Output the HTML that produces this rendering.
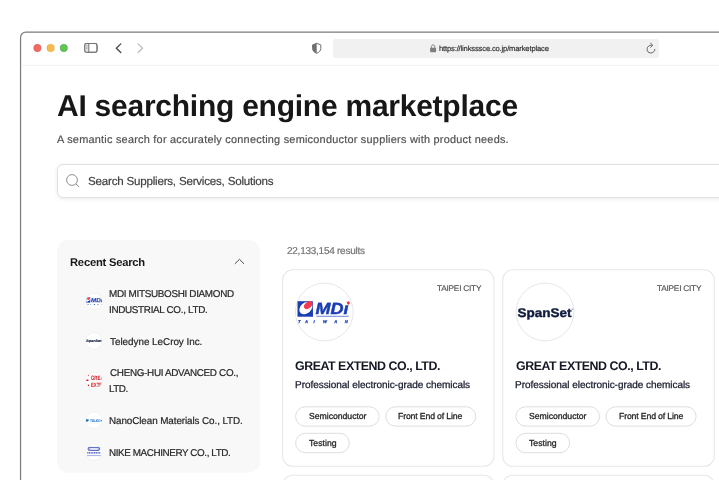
<!DOCTYPE html>
<html lang="en">
<head>
<meta charset="utf-8">
<title>AI searching engine marketplace</title>
<style>
*{box-sizing:border-box;margin:0;padding:0}
html,body{width:719px;height:480px;overflow:hidden;background:#fff}
body{font-family:"Liberation Sans",sans-serif;color:#171717;position:relative}
.abs{position:absolute}
.t{position:absolute;white-space:nowrap;line-height:1;text-rendering:geometricPrecision;will-change:transform}
#search{position:absolute;left:57px;top:164px;width:700px;height:34px;border:1px solid #e0e0e0;border-radius:6px;background:#fff;box-shadow:0 1px 4px rgba(0,0,0,.08)}
.li{font-size:9.9px;color:#262626;-webkit-text-stroke:.2px #262626}
.cw{position:absolute;top:0;width:0;height:0}
.city{font-size:8.3px;color:#525252;left:436.65px;top:284px;letter-spacing:-.245px;-webkit-text-stroke:.15px #525252}
.name{font-size:12.4px;font-weight:700;color:#141824;left:295.3px;top:360px;letter-spacing:-.464px}
.desc{font-size:10px;color:#171a2b;left:295.05px;top:381px;letter-spacing:-.043px;-webkit-text-stroke:.25px #171a2b}
.pt{font-size:8.7px;color:#262626;-webkit-text-stroke:.3px #262626}
</style>
</head>
<body>
<svg class="abs" style="left:0;top:0" width="719" height="480" viewBox="0 0 719 480">
  <!-- window frame -->
  <rect x="20.55" y="32.2" width="760" height="520" rx="5.2" fill="#fff" stroke="#7b7b7b" stroke-width="1.2"/>
  <line x1="21.2" y1="65.3" x2="719" y2="65.3" stroke="#f2f2f2" stroke-width="1"/>
  <!-- traffic lights -->
  <circle cx="37.4" cy="48" r="3.7" fill="#ee6b60" stroke="#de5a4f" stroke-width=".6"/>
  <circle cx="50.6" cy="48" r="3.7" fill="#f5bd4f" stroke="#dfa63c" stroke-width=".6"/>
  <circle cx="63.8" cy="48" r="3.7" fill="#61c454" stroke="#4fae43" stroke-width=".6"/>
  <!-- sidebar icon -->
  <rect x="84.75" y="43.5" width="12.3" height="8.8" rx="1.9" fill="none" stroke="#737373" stroke-width="1.05"/>
  <path d="M86.6 43.5 H88.8 V52.3 H86.6 A1.9 1.9 0 0 1 84.75 50.4 V45.4 A1.9 1.9 0 0 1 86.6 43.5Z" fill="#e3e3e3"/>
  <line x1="88.8" y1="43.5" x2="88.8" y2="52.3" stroke="#737373" stroke-width="1"/>
  <path d="M86.2 45.7h1.3M86.2 47.1h1.3M86.2 48.5h1.3" stroke="#8f8f8f" stroke-width=".55"/>
  <rect x="84.75" y="43.5" width="12.3" height="8.8" rx="1.9" fill="none" stroke="#737373" stroke-width="1.05"/>
  <!-- chevrons -->
  <polyline points="120.8,43.9 116.3,48.2 120.8,52.5" fill="none" stroke="#454545" stroke-width="1.3" stroke-linecap="round" stroke-linejoin="round"/>
  <polyline points="138.1,43.9 142.6,48.2 138.1,52.5" fill="none" stroke="#bcbcbc" stroke-width="1.3" stroke-linecap="round" stroke-linejoin="round"/>
  <!-- shield -->
  <path d="M316.7 43.3 L320.8 44.9 V48.4 C320.8 50.7 319.2 52.3 316.7 53.3 C314.2 52.3 312.6 50.7 312.6 48.4 V44.9 Z" fill="#fff" stroke="#6f6f6f" stroke-width="1" stroke-linejoin="round"/>
  <path d="M316.7 43.3 L312.6 44.9 V48.4 C312.6 50.7 314.2 52.3 316.7 53.3 Z" fill="#6f6f6f"/>
  <!-- url bar -->
  <rect x="333" y="38.9" width="326" height="19" rx="3" fill="#f1f1f1"/>
  <!-- lock -->
  <rect x="430.1" y="47.8" width="6" height="4.5" rx=".8" fill="#7e7e7e"/>
  <path d="M431.4 48 V46.6 a1.7 1.7 0 0 1 3.4 0 V48" fill="none" stroke="#7e7e7e" stroke-width=".95"/>
  <!-- reload -->
  <path d="M654.9 49.4 A3.9 3.9 0 1 1 651.4 45.2" fill="none" stroke="#5c5c5c" stroke-width=".95" stroke-linecap="round"/>
  <path d="M650.6 43.3 L652.8 45.2 L650.7 47.2" fill="none" stroke="#5c5c5c" stroke-width=".95" stroke-linecap="round" stroke-linejoin="round"/>
  <!-- recent search panel -->
  <rect x="57.2" y="240.1" width="202.6" height="232.6" rx="11" fill="#f8f8f8"/>
  <!-- cards -->
  <g fill="#fff" stroke="#e8e8e8" stroke-width="1.1">
    <rect x="282.6" y="269.8" width="211.3" height="196.5" rx="10.3"/>
    <rect x="502.7" y="269.8" width="211.6" height="196.5" rx="10.3"/>
    <rect x="282.6" y="475.2" width="211.3" height="60" rx="10.3"/>
    <rect x="502.7" y="475.2" width="211.6" height="60" rx="10.3"/>
  </g>
  <!-- pills -->
  <g fill="#fff" stroke="#dedede" stroke-width="1">
    <rect x="295.6" y="406.8" width="83.6" height="19.3" rx="9.65"/>
    <rect x="385.7" y="406.8" width="90.1" height="19.3" rx="9.65"/>
    <rect x="295.6" y="433.3" width="53.7" height="19.4" rx="9.7"/>
    <rect x="515.9" y="406.8" width="83.6" height="19.3" rx="9.65"/>
    <rect x="606" y="406.8" width="90.1" height="19.3" rx="9.65"/>
    <rect x="515.9" y="433.3" width="53.7" height="19.4" rx="9.7"/>
  </g>
</svg>
<span class="t" id="urltxt" style="left:439.3px;top:45px;font-size:7.6px;letter-spacing:-.156px;color:#333;-webkit-text-stroke:.2px #333">https://linksssce.co.jp/marketplace</span>

<!-- heading -->
<h1 class="t" id="h1" style="left:56.75px;top:92px;font-size:30px;letter-spacing:-.248px;font-weight:700;color:#171717">AI searching engine marketplace</h1>
<p class="t" id="sub" style="left:57px;top:135px;font-size:10.9px;letter-spacing:.24px;color:#525252;-webkit-text-stroke:.2px #525252">A semantic search for accurately connecting semiconductor suppliers with product needs.</p>

<!-- search -->
<div id="search"></div>
<svg class="abs" style="left:60px;top:170px" width="24" height="22" viewBox="60 170 24 22">
  <circle cx="72" cy="180" r="5.4" fill="none" stroke="#8f8f8f" stroke-width="1"/>
  <line x1="75.9" y1="183.9" x2="78.8" y2="186.7" stroke="#8f8f8f" stroke-width="1" stroke-linecap="round"/>
</svg>
<span class="t" id="ph" style="left:88.3px;top:176px;font-size:11.6px;letter-spacing:-.214px;color:#404040;-webkit-text-stroke:.2px #404040">Search Suppliers, Services, Solutions</span>

<!-- recent search panel -->
<span class="t" id="rs" style="left:69.65px;top:258px;font-size:11.2px;letter-spacing:-.213px;color:#171717;font-weight:700">Recent Search</span>
<svg class="abs" style="left:230px;top:254px" width="20" height="14" viewBox="230 254 20 14">
  <polyline points="235.1,263.6 239.45,259.3 243.8,263.6" fill="none" stroke="#4d4d4d" stroke-width="1" stroke-linecap="round" stroke-linejoin="round"/>
</svg>

<span class="t li" id="l1a" style="left:109.35px;top:290px;letter-spacing:-.314px">MDI MITSUBOSHI DIAMOND</span>
<span class="t li" id="l1b" style="left:109.1px;top:306px;letter-spacing:-.321px">INDUSTRIAL CO., LTD.</span>
<span class="t li" id="l2" style="left:110.05px;top:338px;letter-spacing:-.021px">Teledyne LeCroy Inc.</span>
<span class="t li" id="l3a" style="left:109.6px;top:369px;letter-spacing:-.314px">CHENG-HUI ADVANCED CO.,</span>
<span class="t li" id="l3b" style="left:109.35px;top:385px;letter-spacing:-.5px">LTD.</span>
<span class="t li" id="l4" style="left:109.35px;top:417px;letter-spacing:-.095px">NanoClean Materials Co., LTD.</span>
<span class="t li" id="l5" style="left:109.35px;top:449px;letter-spacing:-.409px">NIKE MACHINERY CO., LTD.</span>


<!-- results -->
<span class="t" id="res" style="left:287.1px;top:247px;font-size:10px;letter-spacing:-.253px;color:#737373;-webkit-text-stroke:.2px #737373">22,133,154 results</span>


<!-- logos & list icons -->
<svg class="abs" style="left:0;top:0;text-rendering:geometricPrecision" width="719" height="480" viewBox="0 0 719 480" font-family="Liberation Sans, sans-serif">
  <defs>
    <g id="mdi">
      <rect x="297.5" y="301.2" width="15.3" height="15.5" fill="#1b3db3"/>
      <ellipse cx="305.8" cy="308.1" rx="7.1" ry="5.4" transform="rotate(-40 305.8 308.1)" fill="#fff"/>
      <path d="M312.8 306.5 C312.6 310.6 309.6 313.6 305.2 314.2 L312.8 316.7Z" fill="#1b3db3"/>
      <ellipse cx="308.2" cy="305.1" rx="4.8" ry="3.1" transform="rotate(-40 308.2 305.1)" fill="#f23a4e"/>
      <text x="315.6" y="313.9" font-size="16.2" font-weight="700" font-style="italic" fill="#1b3db3" stroke="#1b3db3" stroke-width=".45" textLength="33" lengthAdjust="spacingAndGlyphs">MD&#305;</text>
      <path d="M348.4 300.9 L350.1 303 L348.2 304.9 L346.6 302.8Z" fill="#ee2b3c"/>
      <line x1="316.4" y1="316.3" x2="348.7" y2="316.3" stroke="#4a68cc" stroke-width=".8"/>
      <text y="323.1" font-size="4.1" font-weight="700" font-style="italic" fill="#1b3db3" stroke="#1b3db3" stroke-width=".25" text-anchor="middle" x="299.2 306.5 314 324.9 335.7 346.2">TAIWAN</text>
    </g>
    <g id="spanset">
      <text x="517.6" y="317" font-size="12.4" font-weight="700" fill="#101b3d" stroke="#101b3d" stroke-width=".4" textLength="54" lengthAdjust="spacingAndGlyphs">SpanSet</text>
      <text x="571.6" y="310.4" font-size="2.4" fill="#101b3d">&#174;</text>
    </g>
    <clipPath id="c1"><circle cx="94" cy="301.5" r="8"/></clipPath>
    <clipPath id="c3"><circle cx="93.9" cy="380.5" r="8"/></clipPath>
    <clipPath id="c4"><circle cx="93.9" cy="420.3" r="8"/></clipPath>
  </defs>

  <!-- card logos -->
  <circle cx="324.3" cy="312" r="28.9" fill="#fff" stroke="#e6e6e6" stroke-width="1"/>
  <use href="#mdi"/>
  <circle cx="545" cy="312" r="28.9" fill="#fff" stroke="#e6e6e6" stroke-width="1"/>
  <use href="#spanset"/>

  <!-- list icon 1: MDi -->
  <circle cx="94" cy="301.5" r="8.25" fill="#fff" stroke="#ededed" stroke-width=".6"/>
  <g clip-path="url(#c1)"><use href="#mdi" transform="translate(-17.76 193.3) scale(.345)"/></g>
  <!-- list icon 2: SpanSet -->
  <circle cx="94" cy="341" r="8.25" fill="#fff" stroke="#ededed" stroke-width=".6"/>
  <use href="#spanset" transform="translate(-60.8 252.4) scale(.284)"/>
  <!-- list icon 3: Great Extend -->
  <circle cx="93.9" cy="380.5" r="8.25" fill="#fff" stroke="#ededed" stroke-width=".6"/>
  <g clip-path="url(#c3)" fill="#d0151f">
    <text x="90.9" y="379.7" font-size="6.3" font-weight="700" textLength="15" lengthAdjust="spacingAndGlyphs">GREAT</text>
    <text x="90.9" y="386.6" font-size="6.3" font-weight="700" textLength="17.6" lengthAdjust="spacingAndGlyphs">EXTEND</text>
    <path d="M87.6 375.4l1.2-.9v1.6zM86.4 379.6h2v1.5h-2zM87.8 384.6l1.4.2-.2 1.4-1.3-.5z"/>
  </g>
  <!-- list icon 4: Teledyne -->
  <circle cx="93.9" cy="420.3" r="8.25" fill="#fff" stroke="#ededed" stroke-width=".6"/>
  <g clip-path="url(#c4)" fill="#1b6fc8">
    <path d="M86 419.3h2.6v1l-1.2 1.5H86z"/>
    <text x="89.9" y="421.8" font-size="3.5" font-weight="700" textLength="17.4" lengthAdjust="spacingAndGlyphs">TELEDYNE</text>
  </g>
  <!-- list icon 5: Nike Machinery -->
  <circle cx="94" cy="452" r="8.25" fill="#fff" stroke="#ededed" stroke-width=".6"/>
  <rect x="88.2" y="447.4" width="11.4" height="3" rx=".8" fill="#a9b6e8" stroke="#2238a8" stroke-width=".7"/>
  <rect x="90.2" y="448.1" width="7.4" height="1.6" fill="#e9edfb"/>
  <line x1="87.2" y1="452.9" x2="100.6" y2="452.9" stroke="#2a43b4" stroke-width="1.3" stroke-dasharray="1.2 .5"/>
  <line x1="87.2" y1="455.6" x2="100.6" y2="455.6" stroke="#5a6fc9" stroke-width=".7" stroke-dasharray="1.6 .4"/>
</svg>

<div class="cw" style="left:0">
  <span class="t city">TAIPEI CITY</span>
  <span class="t name">GREAT EXTEND CO., LTD.</span>
  <span class="t desc">Professional electronic-grade chemicals</span>
  <span class="t pt" style="left:308.55px;top:412px;letter-spacing:-.037px">Semiconductor</span>
  <span class="t pt" style="left:398.4px;top:412px;letter-spacing:-.144px">Front End of Line</span>
  <span class="t pt" style="left:308.9px;top:439px;letter-spacing:.008px">Testing</span>
</div>
<div class="cw" style="left:220.3px">
  <span class="t city">TAIPEI CITY</span>
  <span class="t name">GREAT EXTEND CO., LTD.</span>
  <span class="t desc">Professional electronic-grade chemicals</span>
  <span class="t pt" style="left:308.55px;top:412px;letter-spacing:-.037px">Semiconductor</span>
  <span class="t pt" style="left:398.4px;top:412px;letter-spacing:-.144px">Front End of Line</span>
  <span class="t pt" style="left:308.9px;top:439px;letter-spacing:.008px">Testing</span>
</div>
</body>
</html>
